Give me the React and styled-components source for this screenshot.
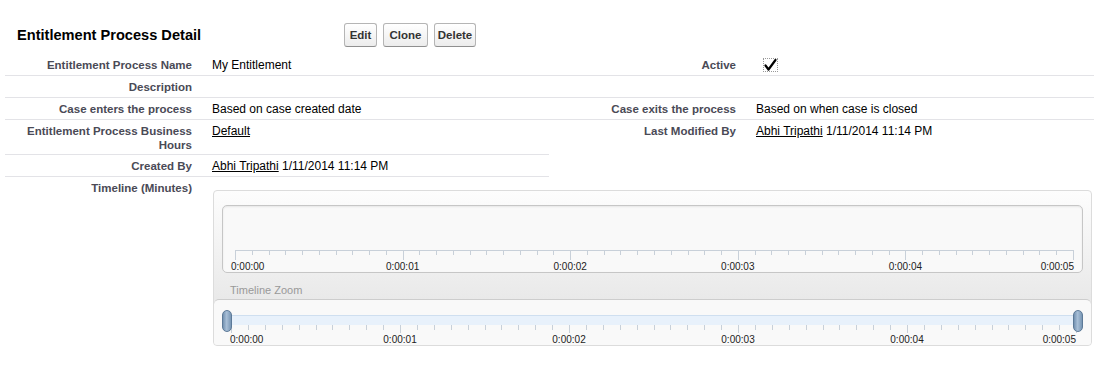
import styled, { createGlobalStyle } from 'styled-components';

const GlobalStyle = createGlobalStyle`
  body {
    margin: 0;
    background: #fff;
    font-family: Arial, "Liberation Sans", sans-serif;
    font-size: 12px;
    color: #000;
  }
`;

const Page = styled.div`
  padding: 23px 5px 30px;
`;

const Header = styled.div`
  display: flex;
  align-items: center;
  height: 24px;
  margin-bottom: 7px;
`;

const Title = styled.h2`
  width: 327px;
  margin: 0;
  padding-left: 12px;
  font-size: 14.6px;
  font-weight: bold;
  color: #000;
`;

const Buttons = styled.div`
  display: flex;
  gap: 6px;
`;

const Button = styled.button`
  width: ${(p) => p.$w}px;
  height: 24px;
  padding: 0;
  border: 1px solid #b5b5b5;
  border-bottom-color: #8f8f8f;
  border-radius: 3px;
  background: linear-gradient(#ffffff, #ececec);
  font-family: Arial, "Liberation Sans", sans-serif;
  font-size: 11.5px;
  font-weight: bold;
  color: #333;
`;

const Grid = styled.div`
  display: grid;
  grid-template-columns: 196px 348px 196px 349px;
`;

const Cell = styled.div`
  min-height: 14px;
  padding: 4px 2px 3px;
  line-height: 14px;
  border-bottom: 1px solid ${(p) => (p.$line ? '#e3e3e7' : 'transparent')};
  grid-column: ${(p) => (p.$span ? `span ${p.$span}` : 'auto')};
`;

const Label = styled(Cell)`
  padding-right: 9px;
  padding-bottom: 2px;
  text-align: right;
  font-size: 11.5px;
  font-weight: bold;
  color: #4a4a56;
`;

const Value = styled(Cell)`
  padding-left: 11px;
  font-size: 12px;
  color: #000;
`;

const Link = styled.a`
  color: #000;
  text-decoration: underline;
`;

const CheckBox = styled.span`
  display: inline-block;
  height: 14px;
  vertical-align: top;
  margin-left: 7px;
  outline: 1px dotted #999;
  outline-offset: -1px;
  svg {
    display: block;
  }
`;

const TimelineBox = styled.div`
  margin: 9px 0 0 1px;
  border: 1px solid #dcdcdc;
  border-radius: 4px;
  background: linear-gradient(#fdfdfd, #e9e9e9 70%);
  overflow: hidden;
`;

const TopArea = styled.div`
  padding: 14px 8px 0;
`;

const InnerPanel = styled.div`
  display: flex;
  flex-direction: column;
  justify-content: flex-end;
  height: 68px;
  box-sizing: border-box;
  border: 1px solid #c6c6c6;
  border-radius: 5px;
  background: #f9f9f9;
  box-shadow: inset 0 1px 2px rgba(0, 0, 0, 0.08);
`;

const ZoomLabel = styled.div`
  height: 26px;
  box-sizing: border-box;
  padding: 11px 0 0 16px;
  line-height: 13px;
  font-size: 11px;
  color: #999;
`;

const LowerPanel = styled.div`
  padding-top: 15px;
  border-top: 1px solid #cdcdcd;
  border-radius: 5px 5px 0 0;
  background: #f9f9f9;
`;

const Track = styled.div`
  position: relative;
  height: 9px;
  margin: 0 13px;
  border-top: 1px solid #cfdff0;
  background: #e8f1fb;
`;

const Handle = styled.span`
  position: absolute;
  top: -6px;
  ${(p) => (p.$side === 'left' ? 'left: -5px;' : 'right: -5px;')}
  width: 10px;
  height: 22px;
  box-sizing: border-box;
  border: 1px solid #5d7a98;
  border-radius: 5px;
  background: linear-gradient(to right, #7492b1, #a8bfd7 45%, #7896b4);
`;

const AxisSvg = styled.svg`
  display: block;
  line {
    stroke: #c8d0d9;
    stroke-width: 1;
    shape-rendering: crispEdges;
  }
  text {
    font-family: Arial, "Liberation Sans", sans-serif;
    font-size: 10px;
    fill: #222;
  }
`;

const Axis = ({ width, height, x0, span, major, minor, textY, baseline, firstDx, lastDx }) => {
  const ticks = [];
  for (let i = 0; i <= 50; i++) {
    const x = Math.round(x0 + (span * i) / 50) + 0.5;
    ticks.push(<line key={i} x1={x} x2={x} y1={0} y2={i % 10 === 0 ? major : minor} />);
  }
  const labels = [0, 1, 2, 3, 4, 5].map((k) => {
    const x = x0 + (span * k) / 5;
    const anchor = k === 0 ? 'start' : k === 5 ? 'end' : 'middle';
    const dx = k === 0 ? firstDx : k === 5 ? lastDx : 0;
    return (
      <text key={k} x={x + dx} y={textY} textAnchor={anchor}>
        0:00:0{k}
      </text>
    );
  });
  return (
    <AxisSvg width={width} height={height}>
      {baseline && <line x1={x0} x2={x0 + span + 1} y1={0.5} y2={0.5} />}
      {ticks}
      {labels}
    </AxisSvg>
  );
};

const Timeline = () => (
  <TimelineBox>
    <TopArea>
      <InnerPanel>
        <Axis width={860} height={22} x0={12} span={838} major={10} minor={5} textY={20} baseline firstDx={-4} lastDx={1} />
      </InnerPanel>
    </TopArea>
    <ZoomLabel>Timeline Zoom</ZoomLabel>
    <LowerPanel>
      <Track>
        <Handle $side="left" />
        <Handle $side="right" />
      </Track>
      <Axis width={878} height={20} x0={17} span={845} major={8} minor={5} textY={18} firstDx={-1} lastDx={0} />
    </LowerPanel>
  </TimelineBox>
);

const Check = () => (
  <CheckBox>
    <svg width="15" height="14" viewBox="0 0 15 14">
      <path d="M2.5 7.5 L5.5 11.5 L12.5 2" fill="none" stroke="#000" strokeWidth="2.2" strokeLinecap="round" strokeLinejoin="round" />
    </svg>
  </CheckBox>
);

export default function App() {
  return (
    <>
      <GlobalStyle />
      <Page>
        <Header>
          <Title>Entitlement Process Detail</Title>
          <Buttons>
            <Button $w={33}>Edit</Button>
            <Button $w={45}>Clone</Button>
            <Button $w={42}>Delete</Button>
          </Buttons>
        </Header>
        <Grid>
          <Label $line>Entitlement Process Name</Label>
          <Value $line>My Entitlement</Value>
          <Label $line>Active</Label>
          <Value $line><Check /></Value>

          <Label $line>Description</Label>
          <Value $line />
          <Label $line />
          <Value $line />

          <Label $line>Case enters the process</Label>
          <Value $line>Based on case created date</Value>
          <Label $line>Case exits the process</Label>
          <Value $line>Based on when case is closed</Value>

          <Label $line>Entitlement Process Business Hours</Label>
          <Value $line><Link>Default</Link></Value>
          <Label>Last Modified By</Label>
          <Value><Link>Abhi Tripathi</Link> 1/11/2014 11:14 PM</Value>

          <Label $line>Created By</Label>
          <Value $line><Link>Abhi Tripathi</Link> 1/11/2014 11:14 PM</Value>
          <Label />
          <Value />

          <Label>Timeline (Minutes)</Label>
          <Value $span={3}>
            <Timeline />
          </Value>
        </Grid>
      </Page>
    </>
  );
}
